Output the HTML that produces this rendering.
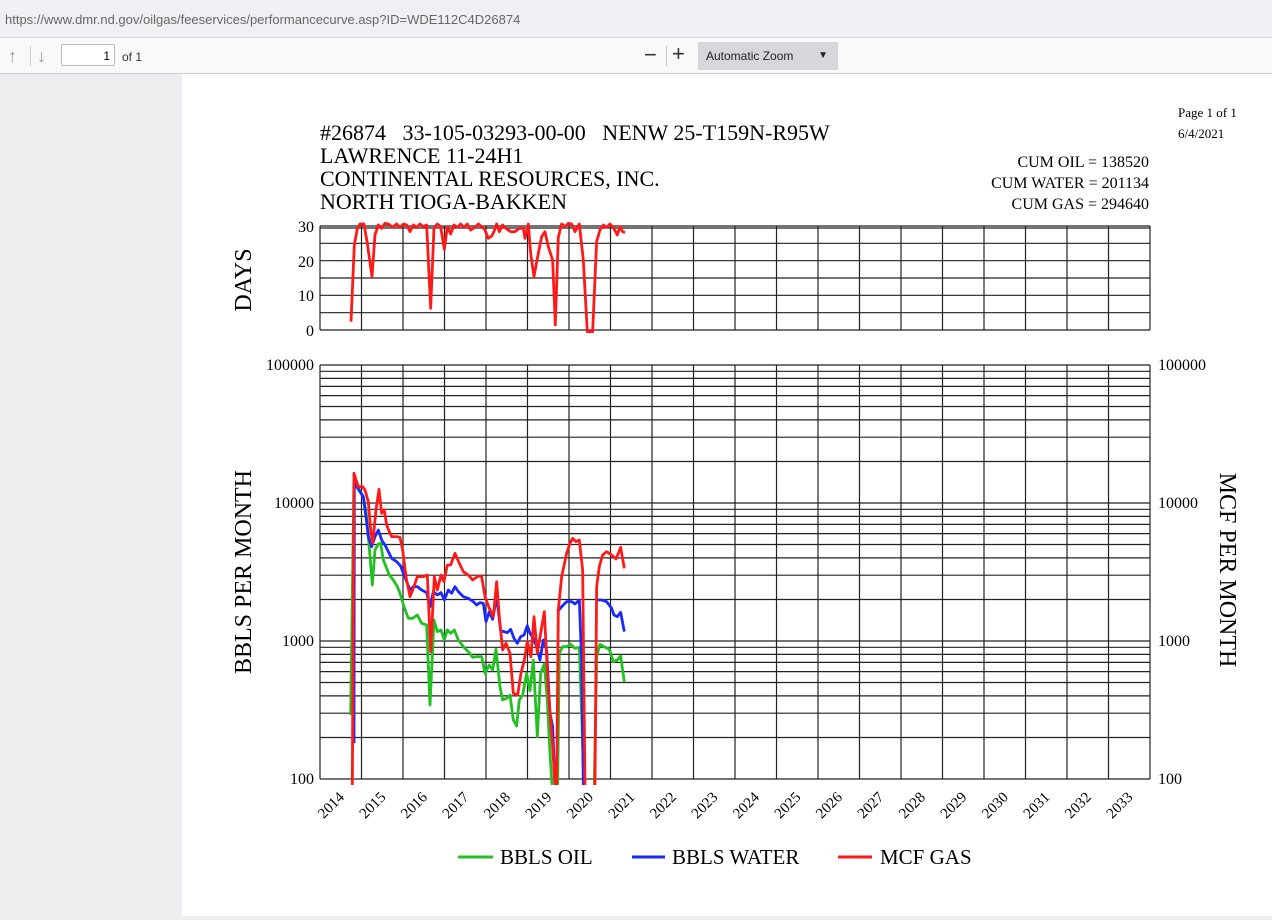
<!DOCTYPE html>
<html><head><meta charset="utf-8"><style>
body{margin:0;width:1272px;height:920px;overflow:hidden;background:#ededf0;font-family:"Liberation Sans",sans-serif;position:relative}
#url{position:absolute;left:0;top:0;width:1272px;height:37px;background:#f0f0f4;border-bottom:1px solid #d7d7db}
#url span{position:absolute;left:5px;top:12px;font-size:13px;color:#666}
#tb{position:absolute;left:0;top:38px;width:1272px;height:35px;background:#f9f9fa;border-bottom:1px solid #ccc}
#page{position:absolute;left:182px;top:74px;width:1090px;height:842px;background:#fff}
svg{position:absolute;left:0;top:0}
</style></head><body>
<div id="url"><span>https://www.dmr.nd.gov/oilgas/feeservices/performancecurve.asp?ID=WDE112C4D26874</span></div>
<div id="tb">
<span style="position:absolute;left:8px;top:8px;font-size:18px;color:#999">&#8593;</span>
<span style="position:absolute;left:30px;top:8px;width:1px;height:20px;background:#ccc"></span>
<span style="position:absolute;left:37px;top:8px;font-size:18px;color:#999">&#8595;</span>
<div style="position:absolute;left:61px;top:6px;width:54px;height:22px;background:#fff;border:1px solid #bbb;border-radius:2px;font-size:12px;text-align:right;line-height:22px;padding-right:4px;box-sizing:border-box">1</div>
<span style="position:absolute;left:122px;top:12px;font-size:12px;color:#333">of 1</span>
<span style="position:absolute;left:644px;top:4px;font-size:22px;color:#333">&#8722;</span>
<span style="position:absolute;left:666px;top:8px;width:1px;height:20px;background:#ccc"></span>
<span style="position:absolute;left:672px;top:3px;font-size:22px;color:#333">+</span>
<div style="position:absolute;left:698px;top:4px;width:140px;height:28px;background:#d7d7db;font-size:12px;line-height:28px;color:#222;padding-left:8px;box-sizing:border-box">Automatic Zoom<span style="position:absolute;right:10px;font-size:10px">&#9660;</span></div>
</div>
<div id="page"></div>
<svg width="1272" height="920" viewBox="0 0 1272 920" font-family="Liberation Serif, serif">
<g font-size="22" fill="#000">
<text x="320" y="140" xml:space="preserve">#26874   33-105-03293-00-00   NENW 25-T159N-R95W</text>
<text x="320" y="163">LAWRENCE  11-24H1</text>
<text x="320" y="186">CONTINENTAL RESOURCES, INC.</text>
<text x="320" y="209">NORTH TIOGA-BAKKEN</text>
</g>
<g font-size="16" text-anchor="end">
<text x="1149" y="167">CUM OIL = 138520</text>
<text x="1149" y="188">CUM WATER = 201134</text>
<text x="1149" y="209">CUM GAS = 294640</text>
</g>
<text x="1178" y="117" font-size="13">Page 1 of 1</text>
<text x="1178" y="138" font-size="13">6/4/2021</text>
<g id="grid" stroke="#222" stroke-width="1.2" fill="none">
<path id="v1" d=""/>
</g>
<g font-size="16" text-anchor="end">
<text x="314" y="232">30</text><text x="314" y="267">20</text><text x="314" y="301">10</text><text x="314" y="336">0</text>
<text x="314" y="370">100000</text><text x="314" y="508">10000</text><text x="314" y="646">1000</text><text x="314" y="784">100</text>
</g>
<g font-size="16">
<text x="1158" y="370">100000</text><text x="1158" y="508">10000</text><text x="1158" y="646">1000</text><text x="1158" y="784">100</text>
</g>
<text transform="translate(251,280) rotate(-90)" font-size="24" text-anchor="middle">DAYS</text>
<text transform="translate(251,572) rotate(-90)" font-size="24" text-anchor="middle">BBLS PER MONTH</text>
<text transform="translate(1220,570) rotate(90)" font-size="24" text-anchor="middle">MCF PER MONTH</text>
<g id="years" font-size="15" text-anchor="end"></g>
<g fill="none" stroke-width="2.8" stroke-linejoin="round">
<polyline stroke="#ff1a1a" transform="translate(260,210) scale(0.3333)" stroke-width="8.4" points="273,335 283,105 292,55 300,42 312,42 322,100 336,200 345,75 355,45 365,55 375,40 385,42 398,52 410,42 420,52 430,42 440,45 450,65 460,45 470,52 480,42 490,50 500,45 512,295 522,55 532,42 542,50 553,118 562,50 572,72 582,45 592,52 602,42 612,52 622,42 632,60 645,52 655,42 665,50 675,60 685,85 695,78 702,65 710,42 718,65 728,45 738,55 752,65 765,65 778,55 790,55 795,85 805,42 812,130 822,200 835,130 845,80 855,65 865,110 878,150 886,345 895,82 905,42 915,50 925,40 935,42 945,65 958,42 970,150 982,365 998,365 1010,95 1020,60 1030,45 1040,52 1050,42 1060,52 1072,75 1080,50 1088,65 1095,68"/>
<g transform="translate(330,460) scale(0.3333)" stroke-width="8.4">
<polyline stroke="#22c022" points="62,765 72,45 80,65 90,95 100,110 108,155 115,230 120,290 127,375 135,270 145,252 152,250 160,300 170,325 178,345 190,360 202,380 210,400 222,440 235,475 248,475 262,465 275,490 290,495 300,735 312,480 322,515 333,510 343,540 352,510 362,520 373,510 385,540 400,560 415,575 428,592 440,590 455,590 465,640 478,615 488,630 498,568 510,680 518,720 530,715 540,705 550,780 560,798 568,720 578,705 590,640 600,692 610,600 622,830 632,640 643,612 652,720 660,880 666,975"/>
<polyline stroke="#22c022" points="683,975 688,580 698,560 710,560 722,553 735,565 748,562 755,760 762,975"/>
<polyline stroke="#22c022" points="793,975 800,590 810,553 822,560 838,568 850,605 862,600 872,588 883,665"/>
<polyline stroke="#1a2aff" points="72,850 73,45 80,80 90,95 100,110 108,170 115,230 125,260 135,230 145,210 155,240 165,255 175,275 185,295 200,305 212,318 222,345 232,370 240,390 250,380 262,380 275,390 290,398 300,440 310,395 322,405 333,398 343,420 355,390 365,400 375,380 385,395 400,410 415,415 430,425 440,435 450,428 460,430 468,485 478,455 488,478 500,410 512,512 522,515 532,518 542,508 552,535 562,550 572,530 582,525 592,497 600,520 610,535 620,560 630,600 640,540 650,570 660,760 668,800 675,975"/>
<polyline stroke="#1a2aff" points="682,455 695,440 710,425 725,425 735,432 748,420 755,600 760,975"/>
<polyline stroke="#1a2aff" points="800,420 815,420 830,425 845,445 852,465 862,470 872,457 883,515"/>
<polyline stroke="#ff1a1a" points="67,975 72,40 78,60 85,80 98,80 105,90 115,125 122,210 128,250 138,150 147,88 155,160 163,150 170,195 178,215 185,230 200,230 210,232 218,270 228,350 240,410 250,385 262,350 280,350 292,345 302,575 313,350 322,390 333,345 342,365 352,315 362,315 375,280 388,310 400,335 415,345 428,360 445,348 455,350 465,410 478,445 490,470 500,365 508,470 518,570 528,550 540,580 550,700 563,705 573,640 583,600 592,545 603,590 612,470 622,580 632,520 643,455 655,690 668,860 675,975"/>
<polyline stroke="#ff1a1a" points="680,975 685,450 695,350 710,280 720,250 728,235 738,245 748,240 758,330 765,975"/>
<polyline stroke="#ff1a1a" points="795,975 800,380 808,320 818,285 830,275 845,285 858,297 865,280 872,262 883,325"/>
</g>
</g>
<g font-size="21">
<line x1="458" y1="857" x2="493" y2="857" stroke="#22c022" stroke-width="3"/><text x="500" y="864">BBLS OIL</text>
<line x1="632" y1="857" x2="665" y2="857" stroke="#1a2aff" stroke-width="3"/><text x="672" y="864">BBLS WATER</text>
<line x1="838" y1="857" x2="872" y2="857" stroke="#ff1a1a" stroke-width="3"/><text x="880" y="864">MCF GAS</text>
</g>
</svg>
<script>
var d="";
for(var k=0;k<=20;k++){var x=(320+41.5*k).toFixed(1);d+="M"+x+" 226V330M"+x+" 365V779";}
for(var i=0;i<=6;i++){var y=(226+i*104/6).toFixed(1);d+="M320 "+y+"H1150";}
d+="M320 228H1150";
for(var dec=0;dec<3;dec++){for(var m=1;m<=9;m++){var y=(779-138*(dec+Math.log10(m))).toFixed(1);d+="M320 "+y+"H1150";}}
d+="M320 365H1150";
document.getElementById("v1").setAttribute("d",d);
var g=document.getElementById("years"),s="";
for(var k=0;k<20;k++){var x=320+41.5*k+25;s+='<text transform="translate('+x+',798) rotate(-45)">'+(2014+k)+'</text>';}
g.innerHTML=s;
</script>
</body></html>
